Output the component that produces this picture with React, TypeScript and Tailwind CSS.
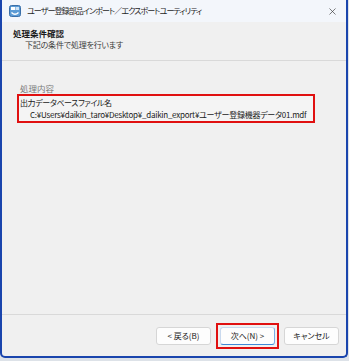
import { X } from "lucide-react";

const font = "font-['Yu_Gothic_UI','Noto_Sans_CJK_JP',sans-serif] [font-feature-settings:'palt']";

function AppIcon() {
  return (
    <svg width="12" height="12" viewBox="0 0 12 12">
      <rect x="0.5" y="0.5" width="11" height="11" rx="2" fill="#5b9bd5" stroke="#3b6fa8" />
      <rect x="2" y="2" width="4" height="3" fill="#ffffff" />
      <rect x="6.5" y="2" width="3.5" height="3" fill="#cfe3f6" />
      <path d="M2.5 7.5 Q6 11 9.5 7.5" stroke="#ffffff" strokeWidth="1.4" fill="none" />
    </svg>
  );
}

function Button({ label, isDefault }: { label: string; isDefault?: boolean }) {
  return (
    <button
      type="button"
      className={
        "h-[18px] rounded-[3px] border bg-[#fdfdfd] text-[8px] text-[#1a1a1a] flex items-center justify-center " +
        (isDefault
          ? "w-[55px] border-[#c9d9ee] border-b-[#3f88d6] border-r-[#7aaee6]"
          : "w-[55px] border-[#d6d6d6]")
      }
    >
      {label}
    </button>
  );
}

export default function App() {
  return (
    <div className={`w-[349px] h-[361px] bg-[#dde2e8] ${font}`}>
      <div className="w-[348px] h-[358px] flex flex-col bg-[#f0f0f0] border-x-2 border-b-2 border-[#1a45ad] rounded-b-[5px] overflow-hidden">
        {/* title bar */}
        <div className="h-[22px] shrink-0 flex items-center bg-[#f3f6fb] pl-[7px] pr-[8px]">
          <AppIcon />
          <span className="ml-[6px] text-[8px] tracking-[-0.9px] text-[#1f1f1f]">
            ユーザー登録部品インポート／エクスポートユーティリティ
          </span>
          <X className="ml-auto h-[11px] w-[11px] text-[#333]" strokeWidth={1.4} />
        </div>

        {/* header */}
        <div className="h-[39px] shrink-0 pl-[11px] pt-[5px] border-b border-[#d9d9d9]">
          <div className="text-[8.5px] font-bold text-[#1a1a1a] leading-[12px]">処理条件確認</div>
          <div className="pl-[12px] text-[8px] tracking-[-0.2px] text-[#3a3a3a] leading-[12px]">下記の条件で処理を行います</div>
        </div>

        {/* body */}
        <div className="flex-1 pt-[22px] pl-[15px] border-b border-[#d9d9d9]">
          <div className="pl-[3px] text-[8.5px] text-[#7a7a7a] leading-[11px]">処理内容</div>
          <div className="w-[298px] h-[29px] border-2 border-[#e01010] bg-[#f4f4f4] pl-[1px] flex flex-col justify-center">
            <div className="text-[8px] tracking-[-0.4px] text-[#1a1a1a] leading-[12px]">出力データベースファイル名</div>
            <div className="pl-[10px] text-[8px] tracking-[-0.25px] text-[#1a1a1a] leading-[12px] whitespace-nowrap">
              C:¥Users¥daikin_taro¥Desktop¥_daikin_export¥ユーザー登録機器データ01.mdf
            </div>
          </div>
        </div>

        {/* footer */}
        <div className="h-[41px] shrink-0 flex items-center justify-end pr-[7px] gap-[5px]">
          <Button label="< 戻る(B)" />
          <div className="border-2 border-[#e01010] p-[2px]">
            <Button label="次へ(N) >" isDefault />
          </div>
          <Button label="キャンセル" />
        </div>
      </div>
    </div>
  );
}
